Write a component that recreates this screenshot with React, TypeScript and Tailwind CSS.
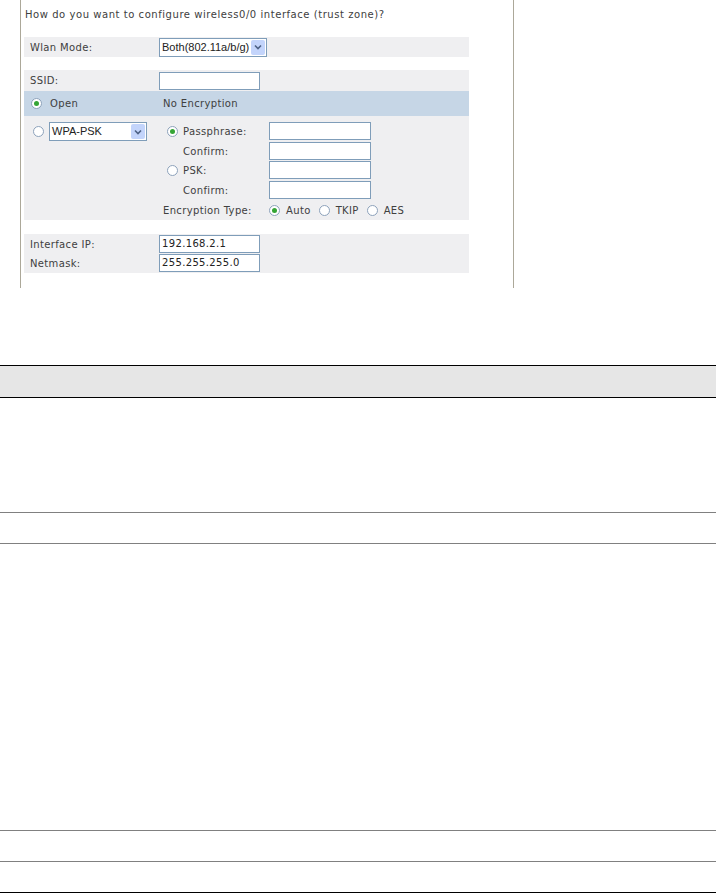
import React from 'react';

const Radio: React.FC<{ checked?: boolean }> = ({ checked }) => (
  <span className="flex h-[11px] w-[11px] shrink-0 items-center justify-center rounded-full border border-[#8da2bb] bg-white">
    {checked && <span className="h-[5px] w-[5px] rounded-full bg-[#35a535]" />}
  </span>
);

const Select: React.FC<{ value: string; className: string }> = ({ value, className }) => (
  <div className={`flex h-[19px] items-stretch border border-[#7f9db9] bg-white ${className}`}>
    <span className="flex-1 pl-[2px] font-['Liberation_Sans',sans-serif] text-[11px] leading-[17px] tracking-normal text-[#222]">{value}</span>
    <span className="m-[1px] flex w-[14px] items-center justify-center rounded-[2px] bg-[#c3d4fb]">
      <svg width="8" height="6" viewBox="0 0 8 6" fill="none">
        <path d="M1 1.5 L4 4.5 L7 1.5" stroke="#4d6185" strokeWidth="1.6" />
      </svg>
    </span>
  </div>
);

const Input: React.FC<{ value?: string; className: string }> = ({ value, className }) => (
  <div className={`h-[18px] border border-[#7f9db9] bg-white pl-[2px] leading-[16px] text-[#222] ${className}`}>{value}</div>
);

export default function App() {
  return (
    <div className="h-[893px] w-[716px] overflow-hidden bg-white font-['DejaVu_Sans',sans-serif] text-[10px] tracking-[0.35px] text-[#404040]">
      {/* wizard screenshot */}
      <div className="ml-[20px] h-[288px] w-[494px] border-x border-[#aca899]">
        <div className="h-[37px] pl-[4px] pt-[9px] leading-[12px] tracking-[0.55px]">
          How do you want to configure wireless0/0 interface (trust zone)?
        </div>

        <div className="ml-[3px] flex h-[20px] w-[445px] items-center bg-[#efeff1]">
          <div className="w-[135px] pl-[6px]">Wlan Mode:</div>
          <Select value="Both(802.11a/b/g)" className="w-[108px]" />
        </div>

        <div className="h-[13px]" />

        <div className="ml-[3px] flex h-[21px] w-[445px] items-center bg-[#efeff1]">
          <div className="w-[135px] pl-[6px]">SSID:</div>
          <Input className="w-[101px]" />
        </div>

        <div className="ml-[3px] flex h-[25px] w-[445px] items-center bg-[#c6d6e6]">
          <div className="flex w-[139px] items-center gap-[8px] pl-[7px]">
            <Radio checked />
            <span>Open</span>
          </div>
          <span>No Encryption</span>
        </div>

        <div className="ml-[3px] flex h-[104px] w-[445px] items-start bg-[#efeff1] pt-[6px]">
          <div className="flex w-[139px] items-center gap-[5px] pl-[9px]">
            <Radio />
            <Select value="WPA-PSK" className="w-[98px]" />
          </div>
          <div className="flex flex-col">
            <div className="flex h-[20px] items-start">
              <div className="flex h-[18px] w-[106px] items-center gap-[5px] pl-[4px]">
                <Radio checked />
                <span>Passphrase:</span>
              </div>
              <Input className="w-[102px]" />
            </div>
            <div className="flex h-[19px] items-start">
              <div className="flex h-[18px] w-[106px] items-center pl-[20px]">Confirm:</div>
              <Input className="w-[102px]" />
            </div>
            <div className="flex h-[20px] items-start">
              <div className="flex h-[18px] w-[106px] items-center gap-[5px] pl-[4px]">
                <Radio />
                <span>PSK:</span>
              </div>
              <Input className="w-[102px]" />
            </div>
            <div className="flex h-[19px] items-start">
              <div className="flex h-[18px] w-[106px] items-center pl-[20px]">Confirm:</div>
              <Input className="w-[102px]" />
            </div>
            <div className="flex h-[20px] items-center">
              <div className="w-[106px]">Encryption Type:</div>
              <Radio checked />
              <span className="ml-[6px]">Auto</span>
              <span className="ml-[8px]">
                <Radio />
              </span>
              <span className="ml-[6px]">TKIP</span>
              <span className="ml-[8px]">
                <Radio />
              </span>
              <span className="ml-[6px]">AES</span>
            </div>
          </div>
        </div>

        <div className="ml-[3px] mt-[14px] flex h-[39px] w-[445px] flex-col gap-[1px] bg-[#efeff1] pt-[1px]">
          <div className="flex h-[18px] items-center">
            <div className="w-[135px] pl-[6px]">Interface IP:</div>
            <Input value="192.168.2.1" className="w-[101px]" />
          </div>
          <div className="flex h-[18px] items-center">
            <div className="w-[135px] pl-[6px]">Netmask:</div>
            <Input value="255.255.255.0" className="w-[101px]" />
          </div>
        </div>
      </div>

      {/* table */}
      <div className="mt-[77px]">
        <div className="h-[33px] border-y border-black bg-[#e6e6e6]" />
        <div className="h-[115px] border-b border-[#808080]" />
        <div className="h-[31px] border-b border-[#808080]" />
        <div className="h-[287px] border-b border-[#808080]" />
        <div className="h-[31px] border-b border-[#808080]" />
        <div className="h-[31px] border-b border-black" />
      </div>
    </div>
  );
}
